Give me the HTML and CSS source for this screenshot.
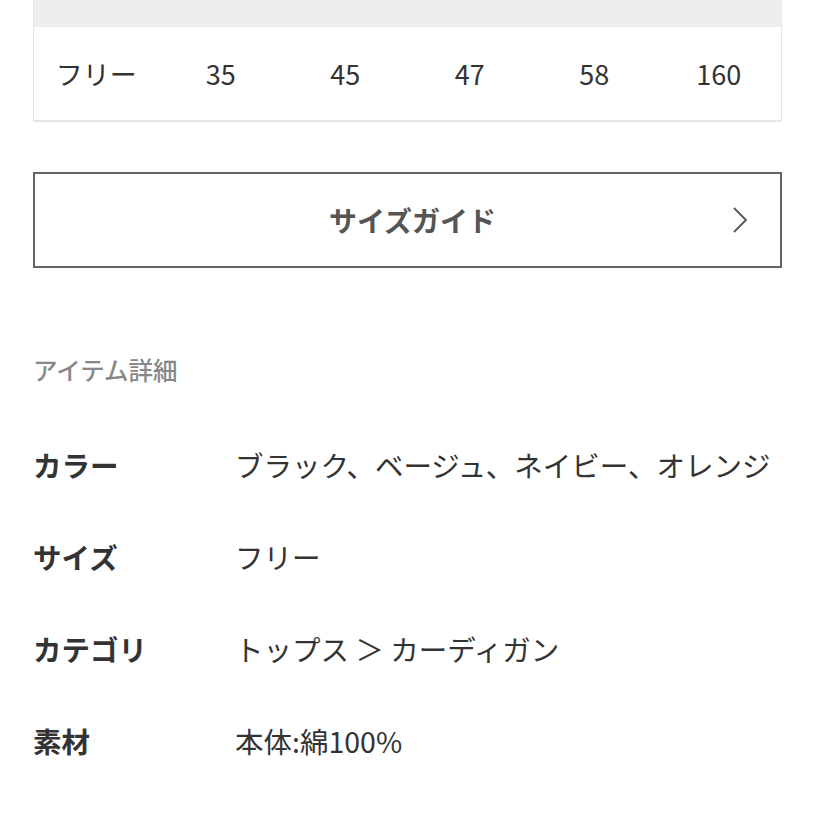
FILE: index.html
```html
<!DOCTYPE html>
<html lang="ja">
<head>
<meta charset="utf-8">
<link rel="stylesheet" href="styles.css">
</head>
<body>
<div class="page">
  <div class="size-table">
    <div class="size-head"></div>
    <div class="size-row">
      <span>フリー</span><span>35</span><span>45</span><span>47</span><span>58</span><span>160</span>
    </div>
  </div>

  <a class="guide-btn">
    <span class="guide-label">サイズガイド</span>
    <svg class="chev" width="16" height="28" viewBox="0 0 16 28"><path d="M2 2 L14 14 L2 26" fill="none" stroke="#555" stroke-width="1.8"/></svg>
  </a>

  <h2 class="section-title">アイテム詳細</h2>

  <dl class="details">
    <div class="drow"><dt>カラー</dt><dd>ブラック、ベージュ、ネイビー、オレンジ</dd></div>
    <div class="drow"><dt>サイズ</dt><dd>フリー</dd></div>
    <div class="drow"><dt>カテゴリ</dt><dd>トップス ＞ カーディガン</dd></div>
    <div class="drow"><dt>素材</dt><dd>本体:綿100%</dd></div>
    <div class="drow"><dt>原産国</dt><dd>中国</dd></div>
  </dl>
</div>
</body>
</html>
```
FILE: styles.css
```css
* { box-sizing: border-box; }
html, body { margin: 0; padding: 0; background: #fff; }
body {
  font-family: "Noto Sans CJK JP", "Noto Sans", sans-serif;
  color: #333;
  overflow: hidden;
  height: 816px;
}
.page {
  width: 749px;
  margin-left: 33px;
}
.size-table {
  border-left: 1px solid #e6e6e6;
  border-right: 1px solid #e6e6e6;
  border-bottom: 2px solid #e6e6e6;
}
.size-head {
  height: 27px;
  background: #eeeeee;
}
.size-row {
  display: grid;
  grid-template-columns: repeat(6, 1fr);
  height: 93px;
  align-items: center;
  text-align: center;
  font-size: 27px;
  color: #333;
}
.guide-btn {
  display: flex;
  align-items: center;
  justify-content: center;
  position: relative;
  height: 96px;
  margin-top: 50px;
  border: 2px solid #666;
  color: #555;
  font-size: 28px;
  font-weight: 700;
}
.guide-label { margin-left: 10px; }
.chev {
  position: absolute;
  right: 32px;
  top: 32px;
}
.section-title {
  margin: 84px 0 0;
  font-size: 24.5px;
  font-weight: 500;
  color: #888;
  line-height: 36px;
}
.details { margin: 30px 0 0; }
.drow {
  display: flex;
  align-items: center;
  height: 92px;
  font-size: 28.5px;
}
.drow dt {
  width: 202px;
  font-weight: 700;
  color: #333;
}
.drow dd {
  margin: 0;
  color: #333;
}
```
